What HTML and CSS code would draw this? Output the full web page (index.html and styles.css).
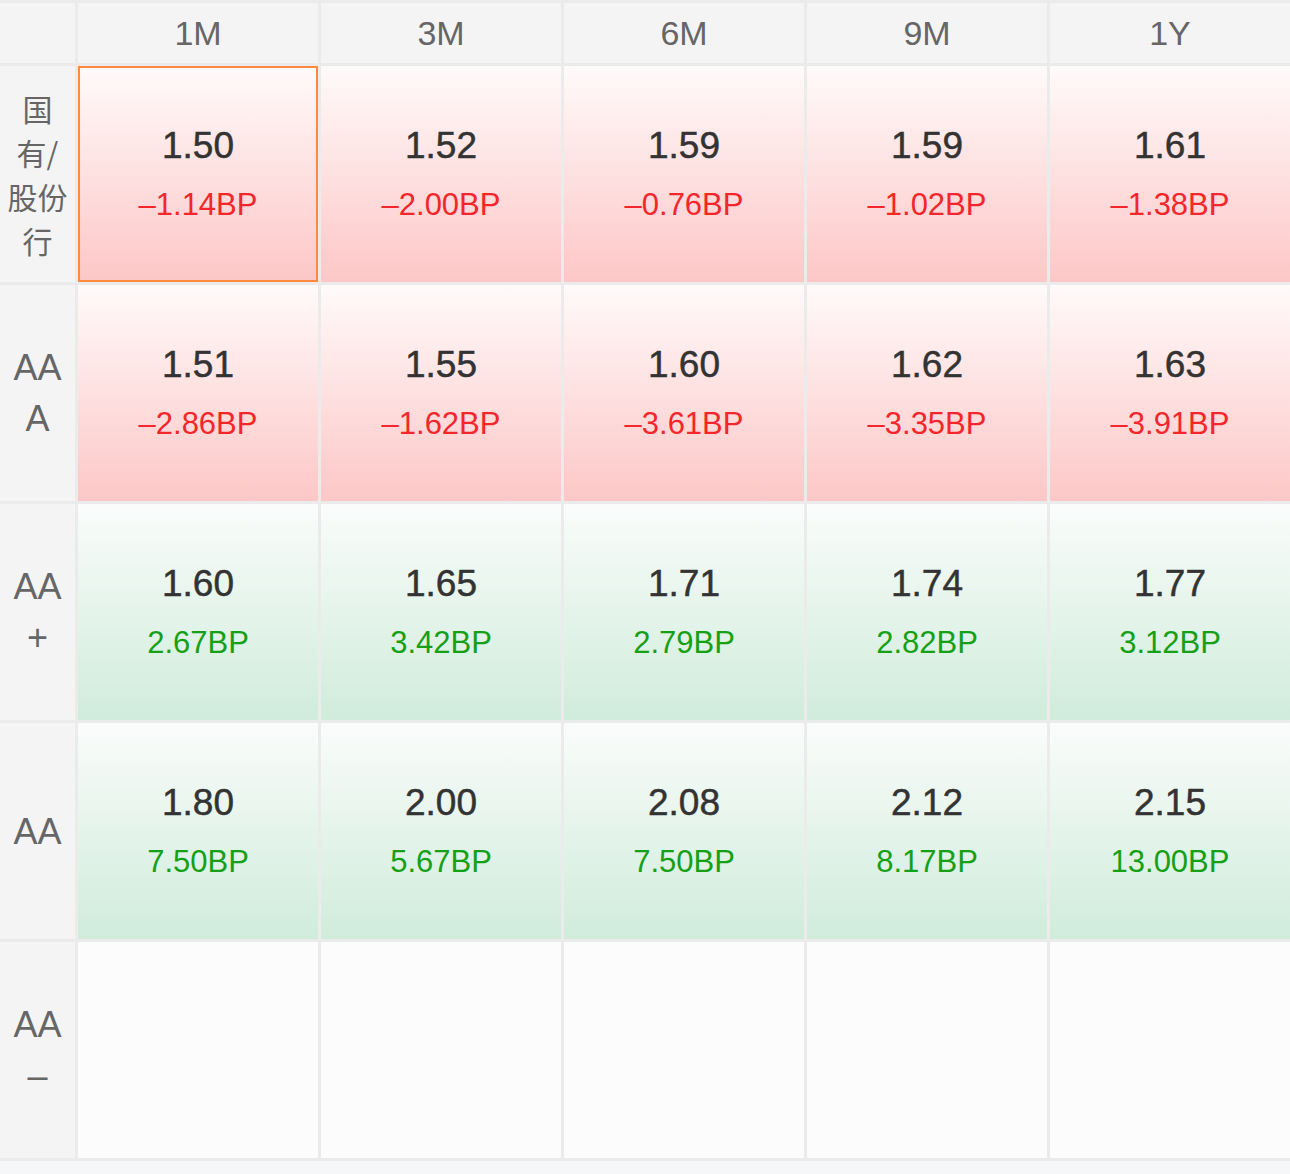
FILE: index.html
```html
<!DOCTYPE html>
<html lang="zh-CN">
<head>
<meta charset="UTF-8">
<title>收益率矩阵</title>
<link rel="stylesheet" href="styles.css">
</head>
<body>
<div class="matrix">
	<div class="corner"></div>
	<div class="head">1M</div>
	<div class="head">3M</div>
	<div class="head">6M</div>
	<div class="head">9M</div>
	<div class="head">1Y</div>

	<div class="label cjk">国<br>有/<br>股份<br>行</div>
	<div class="cell down selected"><span class="value">1.50</span><span class="change">–1.14BP</span></div>
	<div class="cell down"><span class="value">1.52</span><span class="change">–2.00BP</span></div>
	<div class="cell down"><span class="value">1.59</span><span class="change">–0.76BP</span></div>
	<div class="cell down"><span class="value">1.59</span><span class="change">–1.02BP</span></div>
	<div class="cell down"><span class="value">1.61</span><span class="change">–1.38BP</span></div>

	<div class="label">AA<br>A</div>
	<div class="cell down"><span class="value">1.51</span><span class="change">–2.86BP</span></div>
	<div class="cell down"><span class="value">1.55</span><span class="change">–1.62BP</span></div>
	<div class="cell down"><span class="value">1.60</span><span class="change">–3.61BP</span></div>
	<div class="cell down"><span class="value">1.62</span><span class="change">–3.35BP</span></div>
	<div class="cell down"><span class="value">1.63</span><span class="change">–3.91BP</span></div>

	<div class="label">AA<br>+</div>
	<div class="cell up"><span class="value">1.60</span><span class="change">2.67BP</span></div>
	<div class="cell up"><span class="value">1.65</span><span class="change">3.42BP</span></div>
	<div class="cell up"><span class="value">1.71</span><span class="change">2.79BP</span></div>
	<div class="cell up"><span class="value">1.74</span><span class="change">2.82BP</span></div>
	<div class="cell up"><span class="value">1.77</span><span class="change">3.12BP</span></div>

	<div class="label">AA</div>
	<div class="cell up"><span class="value">1.80</span><span class="change">7.50BP</span></div>
	<div class="cell up"><span class="value">2.00</span><span class="change">5.67BP</span></div>
	<div class="cell up"><span class="value">2.08</span><span class="change">7.50BP</span></div>
	<div class="cell up"><span class="value">2.12</span><span class="change">8.17BP</span></div>
	<div class="cell up"><span class="value">2.15</span><span class="change">13.00BP</span></div>

	<div class="label">AA<br>–</div>
	<div class="cell"></div>
	<div class="cell"></div>
	<div class="cell"></div>
	<div class="cell"></div>
	<div class="cell"></div>
</div>
<div class="footer"></div>
</body>
</html>
```

FILE: styles.css
```css
body {
	margin: 0;
	background-color: #f6f7f9;
	font-family: "Liberation Sans", Arial, "Noto Sans CJK SC", sans-serif;
}

.matrix {
	display: grid;
	grid-template-columns: 75px repeat(5, 240px);
	grid-template-rows: 60px repeat(5, 216px);
	gap: 3px;
	padding: 3px 0;
	background-color: #ebebeb;
}

.corner,
.head,
.label {
	background-color: #f4f4f4;
}

.head {
	display: flex;
	align-items: center;
	justify-content: center;
	font-size: 34px;
	color: #666;
}

.label {
	display: flex;
	align-items: center;
	justify-content: center;
	text-align: center;
	font-size: 36px;
	line-height: 51px;
	color: #666;
}

.label.cjk {
	font-family: "Noto Sans CJK SC", sans-serif;
	font-size: 30px;
	line-height: 44px;
}

.cell {
	display: flex;
	flex-direction: column;
	align-items: center;
	justify-content: center;
	background-color: #fcfcfc;
	box-sizing: border-box;
}

.cell.down {
	background: linear-gradient(to bottom, #fffafa, #fdc7c7);
}

.cell.up {
	background: linear-gradient(to bottom, #fafcfb, #d0ecdb);
}

.cell.selected {
	border: 2px solid #ff8a3d;
}

.value {
	font-size: 37px;
	line-height: 50px;
	color: #333;
	-webkit-text-stroke: 0.5px #333;
	margin-bottom: 12px;
}

.change {
	font-size: 31px;
	line-height: 44px;
}

.down .change {
	color: #f2262b;
}

.up .change {
	color: #16a016;
}

.footer {
	height: 13px;
}
```
